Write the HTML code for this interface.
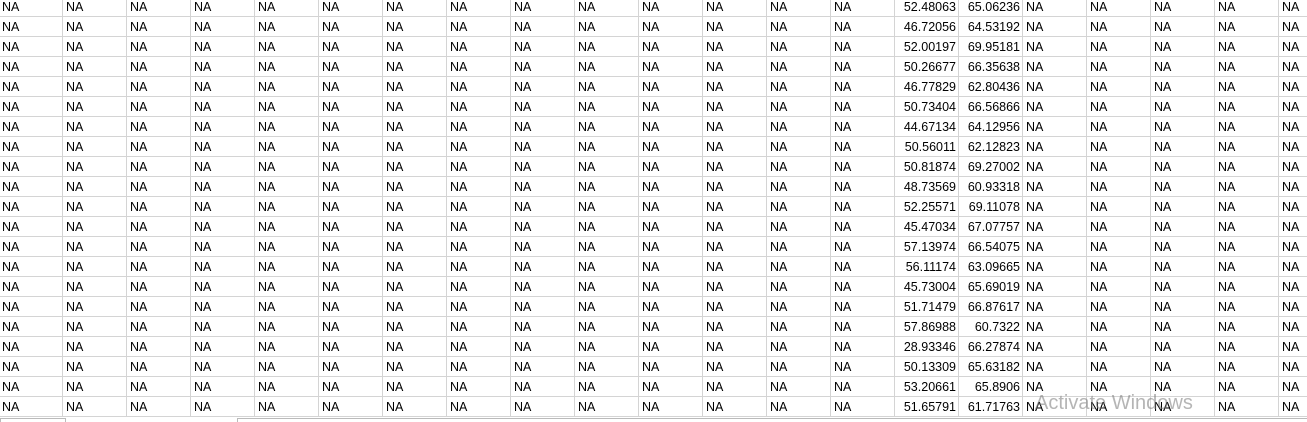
<!DOCTYPE html>
<html><head><meta charset="utf-8"><style>
html,body{margin:0;padding:0;background:#fff;width:1307px;height:422px;overflow:hidden;position:relative}
table{position:absolute;left:-1px;top:-3px;border-collapse:separate;border-spacing:0;table-layout:fixed;width:1344px;font-family:"Liberation Sans",Arial,sans-serif;font-size:12.5px;color:#000}
td{width:64px;box-sizing:border-box;height:20px;border-right:1px solid #d4d4d4;border-bottom:1px solid #d4d4d4;padding:1px 0 0 3px;line-height:18px;white-space:nowrap;overflow:hidden}
td.n{text-align:right;padding:1px 2px 0 0}
.wm{position:absolute;left:1035px;top:392px;font-family:"Liberation Sans",Arial,sans-serif;font-size:20px;color:rgba(120,120,120,0.55)}
.b1{position:absolute;left:0;top:418px;width:66px;height:4px;border:1px solid #bbb;border-bottom:none;box-sizing:border-box}
.b2{position:absolute;left:237px;top:418px;width:1070px;height:4px;border-top:1px solid #bbb;border-left:1px solid #bbb;box-sizing:border-box}
</style></head><body>
<table>
<tr><td>NA<td>NA<td>NA<td>NA<td>NA<td>NA<td>NA<td>NA<td>NA<td>NA<td>NA<td>NA<td>NA<td>NA<td class=n>52.48063<td class=n>65.06236<td>NA<td>NA<td>NA<td>NA<td>NA
<tr><td>NA<td>NA<td>NA<td>NA<td>NA<td>NA<td>NA<td>NA<td>NA<td>NA<td>NA<td>NA<td>NA<td>NA<td class=n>46.72056<td class=n>64.53192<td>NA<td>NA<td>NA<td>NA<td>NA
<tr><td>NA<td>NA<td>NA<td>NA<td>NA<td>NA<td>NA<td>NA<td>NA<td>NA<td>NA<td>NA<td>NA<td>NA<td class=n>52.00197<td class=n>69.95181<td>NA<td>NA<td>NA<td>NA<td>NA
<tr><td>NA<td>NA<td>NA<td>NA<td>NA<td>NA<td>NA<td>NA<td>NA<td>NA<td>NA<td>NA<td>NA<td>NA<td class=n>50.26677<td class=n>66.35638<td>NA<td>NA<td>NA<td>NA<td>NA
<tr><td>NA<td>NA<td>NA<td>NA<td>NA<td>NA<td>NA<td>NA<td>NA<td>NA<td>NA<td>NA<td>NA<td>NA<td class=n>46.77829<td class=n>62.80436<td>NA<td>NA<td>NA<td>NA<td>NA
<tr><td>NA<td>NA<td>NA<td>NA<td>NA<td>NA<td>NA<td>NA<td>NA<td>NA<td>NA<td>NA<td>NA<td>NA<td class=n>50.73404<td class=n>66.56866<td>NA<td>NA<td>NA<td>NA<td>NA
<tr><td>NA<td>NA<td>NA<td>NA<td>NA<td>NA<td>NA<td>NA<td>NA<td>NA<td>NA<td>NA<td>NA<td>NA<td class=n>44.67134<td class=n>64.12956<td>NA<td>NA<td>NA<td>NA<td>NA
<tr><td>NA<td>NA<td>NA<td>NA<td>NA<td>NA<td>NA<td>NA<td>NA<td>NA<td>NA<td>NA<td>NA<td>NA<td class=n>50.56011<td class=n>62.12823<td>NA<td>NA<td>NA<td>NA<td>NA
<tr><td>NA<td>NA<td>NA<td>NA<td>NA<td>NA<td>NA<td>NA<td>NA<td>NA<td>NA<td>NA<td>NA<td>NA<td class=n>50.81874<td class=n>69.27002<td>NA<td>NA<td>NA<td>NA<td>NA
<tr><td>NA<td>NA<td>NA<td>NA<td>NA<td>NA<td>NA<td>NA<td>NA<td>NA<td>NA<td>NA<td>NA<td>NA<td class=n>48.73569<td class=n>60.93318<td>NA<td>NA<td>NA<td>NA<td>NA
<tr><td>NA<td>NA<td>NA<td>NA<td>NA<td>NA<td>NA<td>NA<td>NA<td>NA<td>NA<td>NA<td>NA<td>NA<td class=n>52.25571<td class=n>69.11078<td>NA<td>NA<td>NA<td>NA<td>NA
<tr><td>NA<td>NA<td>NA<td>NA<td>NA<td>NA<td>NA<td>NA<td>NA<td>NA<td>NA<td>NA<td>NA<td>NA<td class=n>45.47034<td class=n>67.07757<td>NA<td>NA<td>NA<td>NA<td>NA
<tr><td>NA<td>NA<td>NA<td>NA<td>NA<td>NA<td>NA<td>NA<td>NA<td>NA<td>NA<td>NA<td>NA<td>NA<td class=n>57.13974<td class=n>66.54075<td>NA<td>NA<td>NA<td>NA<td>NA
<tr><td>NA<td>NA<td>NA<td>NA<td>NA<td>NA<td>NA<td>NA<td>NA<td>NA<td>NA<td>NA<td>NA<td>NA<td class=n>56.11174<td class=n>63.09665<td>NA<td>NA<td>NA<td>NA<td>NA
<tr><td>NA<td>NA<td>NA<td>NA<td>NA<td>NA<td>NA<td>NA<td>NA<td>NA<td>NA<td>NA<td>NA<td>NA<td class=n>45.73004<td class=n>65.69019<td>NA<td>NA<td>NA<td>NA<td>NA
<tr><td>NA<td>NA<td>NA<td>NA<td>NA<td>NA<td>NA<td>NA<td>NA<td>NA<td>NA<td>NA<td>NA<td>NA<td class=n>51.71479<td class=n>66.87617<td>NA<td>NA<td>NA<td>NA<td>NA
<tr><td>NA<td>NA<td>NA<td>NA<td>NA<td>NA<td>NA<td>NA<td>NA<td>NA<td>NA<td>NA<td>NA<td>NA<td class=n>57.86988<td class=n>60.7322<td>NA<td>NA<td>NA<td>NA<td>NA
<tr><td>NA<td>NA<td>NA<td>NA<td>NA<td>NA<td>NA<td>NA<td>NA<td>NA<td>NA<td>NA<td>NA<td>NA<td class=n>28.93346<td class=n>66.27874<td>NA<td>NA<td>NA<td>NA<td>NA
<tr><td>NA<td>NA<td>NA<td>NA<td>NA<td>NA<td>NA<td>NA<td>NA<td>NA<td>NA<td>NA<td>NA<td>NA<td class=n>50.13309<td class=n>65.63182<td>NA<td>NA<td>NA<td>NA<td>NA
<tr><td>NA<td>NA<td>NA<td>NA<td>NA<td>NA<td>NA<td>NA<td>NA<td>NA<td>NA<td>NA<td>NA<td>NA<td class=n>53.20661<td class=n>65.8906<td>NA<td>NA<td>NA<td>NA<td>NA
<tr><td>NA<td>NA<td>NA<td>NA<td>NA<td>NA<td>NA<td>NA<td>NA<td>NA<td>NA<td>NA<td>NA<td>NA<td class=n>51.65791<td class=n>61.71763<td>NA<td>NA<td>NA<td>NA<td>NA
</table>
<div class="wm">Activate Windows</div>
<div class="b1"></div><div class="b2"></div>
</body></html>
